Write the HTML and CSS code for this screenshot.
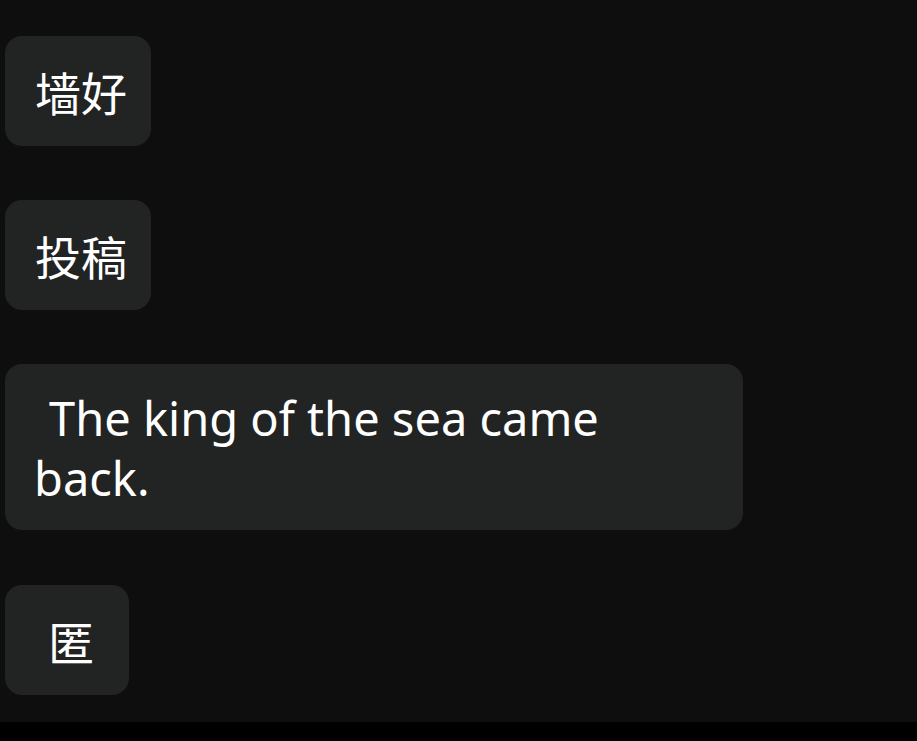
FILE: index.html
```html
<!DOCTYPE html>
<html lang="zh">
<head>
<meta charset="utf-8">
<title>Chat</title>
<link rel="stylesheet" href="styles.css">
</head>
<body>
<main class="screen">
  <div class="list">
    <div class="bubble bubble--cjk">墙好</div>
    <div class="bubble bubble--cjk">投稿</div>
    <div class="bubble bubble--wide"><span class="lead">&nbsp;</span>The king of the sea came back.</div>
    <div class="bubble bubble--cjk bubble--single">匿</div>
  </div>
  <div class="bottom-bar"></div>
</main>
</body>
</html>
```
FILE: styles.css
```css
html, body {
  margin: 0;
  padding: 0;
  background: #0e0e0e;
}
.screen {
  width: 917px;
  height: 741px;
  display: flex;
  flex-direction: column;
  overflow: hidden;
  background: #0e0e0e;
}
.list {
  flex: 1;
  display: flex;
  flex-direction: column;
  align-items: flex-start;
  gap: 54px;
  padding: 36px 0 0 5px;
}
.bubble {
  box-sizing: border-box;
  background: #222423;
  border-radius: 17px;
  color: #ffffff;
  font-family: "Noto Sans", "Noto Sans CJK SC", sans-serif;
  font-size: 47px;
  line-height: 60px;
}
.bubble--cjk {
  min-height: 110px;
  display: flex;
  align-items: center;
  padding: 23px 24px 23px 30px;
  font-family: "Noto Sans CJK SC", sans-serif;
  font-size: 46px;
}
.bubble--wide {
  width: 738px;
  padding: 24px 30px 22px 29px;
}
.lead {
  display: inline-block;
  width: 15px;
}
.bubble--single {
  margin-top: 1px;
  padding-left: 43px;
  padding-right: 35px;
}
.bottom-bar {
  height: 19px;
  background: #000;
}
```
